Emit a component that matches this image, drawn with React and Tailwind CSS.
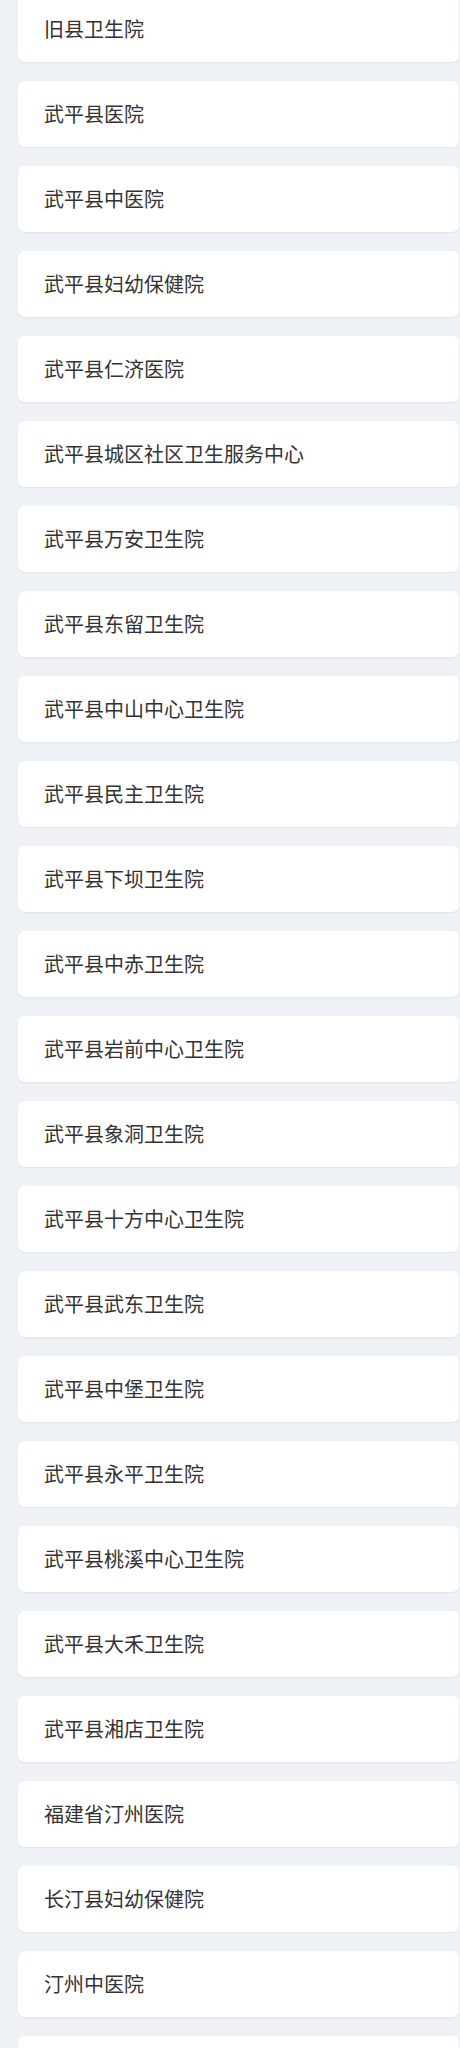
const hospitals = [
  '旧县卫生院',
  '武平县医院',
  '武平县中医院',
  '武平县妇幼保健院',
  '武平县仁济医院',
  '武平县城区社区卫生服务中心',
  '武平县万安卫生院',
  '武平县东留卫生院',
  '武平县中山中心卫生院',
  '武平县民主卫生院',
  '武平县下坝卫生院',
  '武平县中赤卫生院',
  '武平县岩前中心卫生院',
  '武平县象洞卫生院',
  '武平县十方中心卫生院',
  '武平县武东卫生院',
  '武平县中堡卫生院',
  '武平县永平卫生院',
  '武平县桃溪中心卫生院',
  '武平县大禾卫生院',
  '武平县湘店卫生院',
  '福建省汀州医院',
  '长汀县妇幼保健院',
  '汀州中医院',
  '长汀县医院',
];

const App = () => {
  return (
    <div
      className="min-h-screen bg-[#eef2f6] pl-[18px] pr-px overflow-hidden"
      style={{ fontFamily: '"Noto Sans CJK SC", "Noto Sans", sans-serif' }}
    >
      <div className="-mt-[4px] flex flex-col gap-[19px] pb-6">
        {hospitals.map((name) => (
          <div
            key={name}
            className="h-[66px] flex items-center pl-[26px] bg-white rounded-[7px] shadow-[0_1px_2px_rgba(0,0,0,0.06)] text-[20px] text-[#333333]"
          >
            {name}
          </div>
        ))}
      </div>
    </div>
  );
};

export default App;
